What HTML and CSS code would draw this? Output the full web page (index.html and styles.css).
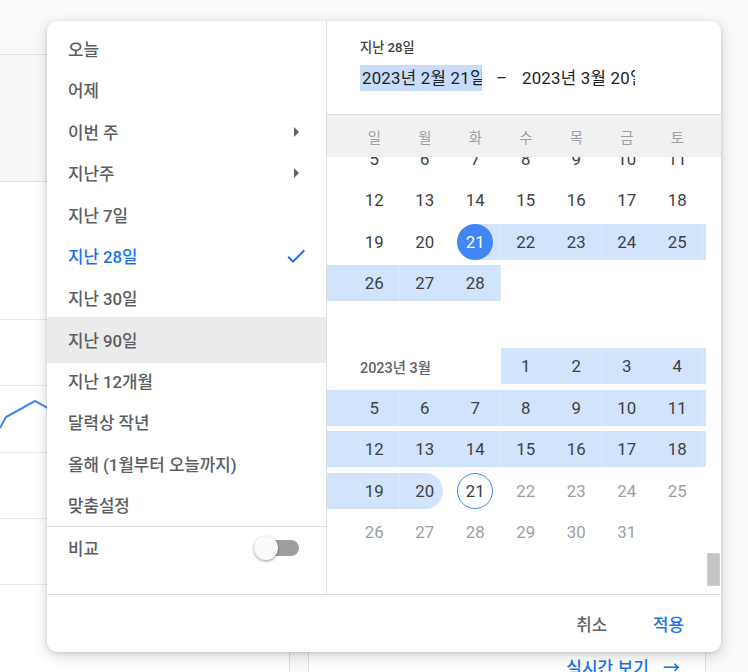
FILE: index.html
```html
<!DOCTYPE html>
<html lang="ko">
<head>
    <meta charset="UTF-8">
    <meta name="viewport" content="width=device-width, initial-scale=1.0">
    <title>기간 선택</title>
    <link rel="stylesheet" href="styles.css">
</head>
<body>
    <!-- pagina de fondo, tapada casi entera por el dialogo -->
    <div class="fondo">
        <div class="lateral">
            <div class="lateral-cab"></div>
            <div class="lateral-sub"></div>
            <div class="grafico">
                <svg class="linea" width="289" height="300" viewBox="0 0 289 300">
                    <polyline points="0,246 6,235 35,219 60,233" fill="none" stroke="#4285f4" stroke-width="2"/>
                </svg>
                <div class="g-linea"></div>
                <div class="g-linea"></div>
                <div class="g-linea"></div>
                <div class="g-linea"></div>
                <div class="g-linea"></div>
            </div>
        </div>
        <div class="principal">
            <a class="enlace" href="#">실시간 보기 <span class="flecha">→</span></a>
        </div>
    </div>

    <div class="dialogo">
        <div class="cuerpo">
            <div class="menu">
                <ul class="opciones">
                    <li>오늘</li>
                    <li>어제</li>
                    <li>이번 주
                        <svg width="24" height="24" viewBox="0 0 24 24"><path d="M10 17l5-5-5-5v10z" fill="#5f6368"/></svg>
                    </li>
                    <li>지난주
                        <svg width="24" height="24" viewBox="0 0 24 24"><path d="M10 17l5-5-5-5v10z" fill="#5f6368"/></svg>
                    </li>
                    <li>지난 7일</li>
                    <li class="elegido">지난 28일
                        <svg width="24" height="24" viewBox="0 0 24 24"><path d="M9 16.17L4.83 12l-1.42 1.41L9 19 21 7l-1.41-1.41z" fill="#1a73e8"/></svg>
                    </li>
                    <li>지난 30일</li>
                    <li class="encima">지난 90일</li>
                    <li>지난 12개월</li>
                    <li>달력상 작년</li>
                    <li>올해 (1월부터 오늘까지)</li>
                    <li>맞춤설정</li>
                </ul>
                <div class="comparar">
                    <span>비교</span>
                    <span class="interruptor"></span>
                </div>
            </div>

            <div class="panel">
                <div class="cabecera">
                    <div class="etiqueta">지난 28일</div>
                    <div class="fechas">
                        <span class="entrada sel">2023년 2월 21일</span>
                        <span class="guion">–</span>
                        <span class="entrada">2023년 3월 20일</span>
                    </div>
                </div>
                <div class="semana">
                    <i></i><span>일</span><span>월</span><span>화</span><span>수</span><span>목</span><span>금</span><span>토</span><i></i>
                </div>
                <div class="calendario">
                    <div class="desliza">
                        <!-- febrero -->
                        <div class="week">
                            <span class="mes">2023년 2월</span>
                            <span class="d"><span>1</span></span><span class="d"><span>2</span></span><span class="d"><span>3</span></span><span class="d"><span>4</span></span><i></i>
                        </div>
                        <div class="week">
                            <i></i><span class="d"><span>5</span></span><span class="d"><span>6</span></span><span class="d"><span>7</span></span><span class="d"><span>8</span></span><span class="d"><span>9</span></span><span class="d"><span>10</span></span><span class="d"><span>11</span></span><i></i>
                        </div>
                        <div class="week">
                            <i></i><span class="d"><span>12</span></span><span class="d"><span>13</span></span><span class="d"><span>14</span></span><span class="d"><span>15</span></span><span class="d"><span>16</span></span><span class="d"><span>17</span></span><span class="d"><span>18</span></span><i></i>
                        </div>
                        <div class="week">
                            <i></i><span class="d"><span>19</span></span><span class="d"><span>20</span></span><span class="d start"><span>21</span></span><span class="d in"><span>22</span></span><span class="d in"><span>23</span></span><span class="d in"><span>24</span></span><span class="d in"><span>25</span></span><i class="in"></i>
                        </div>
                        <div class="week">
                            <i class="in"></i><span class="d in"><span>26</span></span><span class="d in"><span>27</span></span><span class="d in"><span>28</span></span><span class="d"></span><span class="d"></span><span class="d"></span><span class="d"></span><i></i>
                        </div>
                        <div class="week"></div>
                        <!-- marzo -->
                        <div class="week">
                            <span class="mes">2023년 3월</span>
                            <span class="d in"><span>1</span></span><span class="d in"><span>2</span></span><span class="d in"><span>3</span></span><span class="d in"><span>4</span></span><i class="in"></i>
                        </div>
                        <div class="week">
                            <i class="in"></i><span class="d in"><span>5</span></span><span class="d in"><span>6</span></span><span class="d in"><span>7</span></span><span class="d in"><span>8</span></span><span class="d in"><span>9</span></span><span class="d in"><span>10</span></span><span class="d in"><span>11</span></span><i class="in"></i>
                        </div>
                        <div class="week">
                            <i class="in"></i><span class="d in"><span>12</span></span><span class="d in"><span>13</span></span><span class="d in"><span>14</span></span><span class="d in"><span>15</span></span><span class="d in"><span>16</span></span><span class="d in"><span>17</span></span><span class="d in"><span>18</span></span><i class="in"></i>
                        </div>
                        <div class="week">
                            <i class="in"></i><span class="d in"><span>19</span></span><span class="d end"><span>20</span></span><span class="d hoy"><span>21</span></span><span class="d futuro"><span>22</span></span><span class="d futuro"><span>23</span></span><span class="d futuro"><span>24</span></span><span class="d futuro"><span>25</span></span><i></i>
                        </div>
                        <div class="week">
                            <i></i><span class="d futuro"><span>26</span></span><span class="d futuro"><span>27</span></span><span class="d futuro"><span>28</span></span><span class="d futuro"><span>29</span></span><span class="d futuro"><span>30</span></span><span class="d futuro"><span>31</span></span><span class="d"></span><i></i>
                        </div>
                        <div class="week"></div>
                    </div>
                    <div class="barra"></div>
                </div>
            </div>
        </div>
        <div class="pie">
            <button class="boton">취소</button>
            <button class="boton azul">적용</button>
        </div>
    </div>
</body>
</html>
```

FILE: styles.css
```css
* {
    box-sizing: border-box;
}
body {
    margin: 0;
    height: 672px;
    overflow: hidden;
    background: #f8f9fa;
    font-family: Roboto, "Noto Sans CJK KR", sans-serif;
    color: #3c4043;
}

/* fondo */
.fondo {
    display: flex;
    gap: 18px;
    height: 680px;
}
.lateral {
    width: 290px;
    display: flex;
    flex-direction: column;
}
.lateral-cab {
    height: 55px;
    border-bottom: 1px solid #e0e0e0;
}
.lateral-sub {
    height: 127px;
    background: #f7f8fa;
    border-bottom: 1px solid #e0e0e0;
    border-right: 1px solid #dadce0;
}
.grafico {
    flex: 1;
    position: relative;
    padding-top: 137px;
    background: #fff;
    border-right: 1px solid #dadce0;
}
.linea {
    position: absolute;
    left: 0;
    top: 0;
}
.g-linea {
    height: 66.3px;
    border-top: 1px solid #e8eaed;
}
.principal {
    width: 398px;
    margin-top: 54px;
    background: #fff;
    border-left: 1px solid #dadce0;
    border-right: 1px solid #dadce0;
    display: flex;
    align-items: flex-end;
    justify-content: flex-end;
    padding: 0 25px 2px 0;
}
.enlace {
    color: #1a73e8;
    text-decoration: none;
    font-size: 17px;
    font-weight: 500;
    line-height: 20px;
}
.flecha {
    margin-left: 10px;
}

/* dialogo */
.dialogo {
    position: absolute;
    left: 47px;
    top: 21px;
    width: 674px;
    height: 631px;
    background: #fff;
    border-radius: 10px;
    box-shadow: 0 4px 14px rgba(0, 0, 0, 0.16), 0 1px 4px rgba(0, 0, 0, 0.12);
    overflow: hidden;
    display: flex;
    flex-direction: column;
}
.cuerpo {
    display: flex;
    height: 574px;
    border-bottom: 1px solid #dadce0;
}
.menu {
    width: 280px;
    border-right: 1px solid #dadce0;
}
.opciones {
    list-style: none;
    margin: 0;
    padding: 7px 0 0;
}
.opciones li {
    height: 41.5px;
    display: flex;
    align-items: center;
    justify-content: space-between;
    padding: 0 18px 0 21px;
    font-size: 16.8px;
    font-weight: 500;
    color: #5a5e63;
}
.opciones li.elegido {
    color: #1a73e8;
}
.opciones li.encima {
    height: 46px;
    margin: -2px 0 -2.5px;
    background: #ebebeb;
}
.comparar {
    height: 42px;
    border-top: 1px solid #dadce0;
    display: flex;
    align-items: center;
    justify-content: space-between;
    padding: 0 27px 0 21px;
    font-size: 16.8px;
    font-weight: 500;
    color: #5a5e63;
}
.interruptor {
    position: relative;
    width: 45px;
    height: 24px;
}
.interruptor::before {
    content: "";
    position: absolute;
    left: 6px;
    right: 0;
    top: 4px;
    height: 16px;
    border-radius: 8px;
    background: #9e9e9e;
}
.interruptor::after {
    content: "";
    position: absolute;
    left: 0;
    top: 0;
    width: 24px;
    height: 24px;
    border-radius: 50%;
    background: #fafafa;
    box-shadow: 0 1px 3px rgba(0, 0, 0, 0.4);
}

.panel {
    flex: 1;
    display: flex;
    flex-direction: column;
    min-width: 0;
}
.cabecera {
    height: 94px;
    border-bottom: 1px solid #dadce0;
    padding: 18px 0 0 33px;
}
.etiqueta {
    font-size: 13.2px;
    font-weight: 500;
    line-height: 17px;
}
.fechas {
    display: flex;
    margin-top: 9px;
    font-size: 16.8px;
    color: #202124;
}
.entrada {
    display: block;
    height: 26px;
    line-height: 26px;
    overflow: hidden;
    white-space: nowrap;
    letter-spacing: 0.25px;
    width: 114px;
    padding-left: 1px;
}
.entrada.sel {
    width: 122px;
    padding-left: 2px;
    background: #c8dbf8;
}
.guion {
    width: 39px;
    text-align: center;
    line-height: 26px;
}
.semana {
    height: 42px;
    background: #f1f1f1;
    display: grid;
    grid-template-columns: 22px repeat(7, 50.5px) 1fr;
    align-items: center;
    text-align: center;
    font-size: 14.4px;
    color: #9aa0a6;
}
.calendario {
    flex: 1;
    position: relative;
    overflow: hidden;
}
.desliza {
    margin-top: -60.75px;
    margin-right: 15px;
}
.week {
    display: grid;
    grid-template-columns: 22px repeat(7, 50.5px) 1fr;
    height: 41.5px;
}
.week > * {
    display: flex;
    align-items: center;
    justify-content: center;
}
.d span {
    width: 36px;
    height: 36px;
    border-radius: 50%;
    display: flex;
    align-items: center;
    justify-content: center;
    font-size: 16.8px;
}
.in {
    background: linear-gradient(#d2e3fc, #d2e3fc) center / 100% 36px no-repeat;
}
.start {
    background: linear-gradient(to right, transparent 50%, #d2e3fc 50%) center / 100% 36px no-repeat;
}
.start span {
    background: #4285f4;
    color: #fff;
}
.end {
    background: linear-gradient(to right, #d2e3fc 50%, transparent 50%) center / 100% 36px no-repeat;
}
.end span {
    background: #d2e3fc;
}
.hoy span {
    border: 1px solid #4285f4;
}
.futuro {
    color: #9aa0a6;
}
.mes {
    grid-column: 1 / 5;
    justify-content: flex-start !important;
    padding-left: 33px;
    font-size: 14.4px;
    font-weight: 500;
    color: #5f6368;
}
.barra {
    position: absolute;
    right: 1px;
    top: 396px;
    width: 13px;
    height: 33px;
    background: #c4c4c4;
    border: 1px solid #d0d0d0;
}

.pie {
    flex: 1;
    display: flex;
    justify-content: flex-end;
    align-items: center;
    gap: 14px;
    padding-right: 21px;
}
.boton {
    background: none;
    border: none;
    height: 36px;
    padding: 0 16px;
    font-family: inherit;
    font-size: 16.8px;
    font-weight: 500;
    color: #5f6368;
}
.boton.azul {
    color: #1a73e8;
}
```
